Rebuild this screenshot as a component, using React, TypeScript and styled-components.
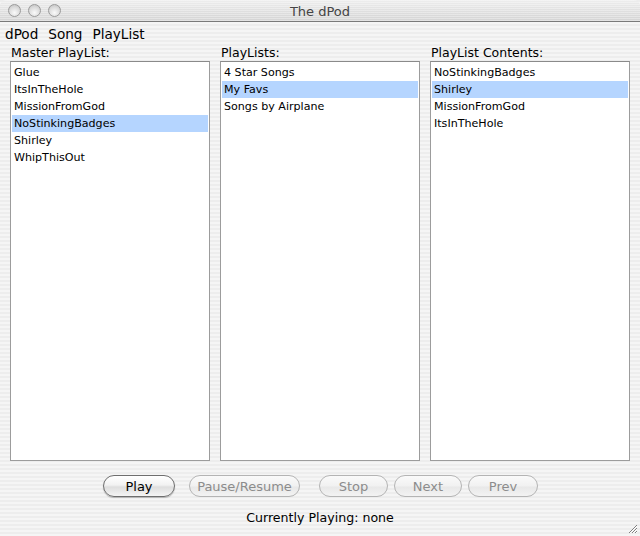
import * as React from "react";
import styled, { createGlobalStyle } from "styled-components";

const GlobalStyle = createGlobalStyle`
  html, body {
    margin: 0;
    padding: 0;
  }
  body {
    font-family: "DejaVu Sans", "Liberation Sans", sans-serif;
    font-size: 12px;
    color: #000;
  }
`;

const master = ["Glue", "ItsInTheHole", "MissionFromGod", "NoStinkingBadges", "Shirley", "WhipThisOut"];
const playlists = ["4 Star Songs", "My Favs", "Songs by Airplane"];
const contents = ["NoStinkingBadges", "Shirley", "MissionFromGod", "ItsInTheHole"];

const buttons = [
  { label: "Play", width: 72, enabled: true, gap: 14 },
  { label: "Pause/Resume", width: 111, enabled: false, gap: 19 },
  { label: "Stop", width: 69, enabled: false, gap: 6 },
  { label: "Next", width: 68, enabled: false, gap: 6 },
  { label: "Prev", width: 70, enabled: false, gap: 0 },
];

type PanelProps = { title: string; items: string[]; selected: number };

const Panel = ({ title, items, selected }: PanelProps) => (
  <Column>
    <Label>{title}</Label>
    <ListBox>
      {items.map((item, i) => (
        <Row key={item} $selected={i === selected}>
          {item}
        </Row>
      ))}
    </ListBox>
  </Column>
);

const App = () => {
  return (
    <Window>
      <GlobalStyle />
      <TitleBar>
        <Lights>
          <Light />
          <Light />
          <Light />
        </Lights>
        <Title>The dPod</Title>
      </TitleBar>
      <MenuBar>
        <MenuItem>dPod</MenuItem>
        <MenuItem>Song</MenuItem>
        <MenuItem>PlayList</MenuItem>
      </MenuBar>
      <Body>
        <Panels>
          <Panel title="Master PlayList:" items={master} selected={3} />
          <Panel title="PlayLists:" items={playlists} selected={1} />
          <Panel title="PlayList Contents:" items={contents} selected={1} />
        </Panels>
        <ButtonRow>
          {buttons.map((b) => (
            <Button key={b.label} $w={b.width} $enabled={b.enabled} $gapAfter={b.gap}>
              {b.label}
            </Button>
          ))}
        </ButtonRow>
        <Status>Currently Playing: none</Status>
      </Body>
      <Grip>
        <svg width="11" height="11" viewBox="0 0 11 11">
          <path d="M10 2 L2 10 M10 5 L5 10 M10 8 L8 10" stroke="#808080" strokeWidth="1" />
          <path d="M10 3 L3 10 M10 6 L6 10 M10 9 L9 10" stroke="#fff" strokeWidth="1" />
        </svg>
      </Grip>
    </Window>
  );
};

const stripes = `repeating-linear-gradient(
  to bottom,
  #ededed 0px,
  #ededed 2px,
  #f5f5f5 2px,
  #f5f5f5 4px
)`;

const Window = styled.div`
  position: relative;
  width: 640px;
  height: 536px;
  overflow: hidden;
  background: ${stripes};
  display: flex;
  flex-direction: column;
`;

const TitleBar = styled.div`
  height: 21px;
  display: flex;
  align-items: center;
  justify-content: center;
  position: relative;
  background: repeating-linear-gradient(
      to bottom,
      rgba(255, 255, 255, 0.35) 0px,
      rgba(255, 255, 255, 0.35) 1px,
      rgba(0, 0, 0, 0) 1px,
      rgba(0, 0, 0, 0) 2px
    ),
    linear-gradient(to bottom, #eeeeee 0%, #e0e0e0 50%, #d4d4d4 100%);
  border-bottom: 1px solid #7a7a7a;
  border-radius: 6px 6px 0 0;
`;

const Lights = styled.div`
  position: absolute;
  left: 8px;
  top: 4px;
  display: flex;
  gap: 7px;
`;

const Light = styled.div`
  width: 13px;
  height: 13px;
  border-radius: 50%;
  box-sizing: border-box;
  border: 1px solid #9a9a9a;
  background: radial-gradient(circle at 50% 70%, #fafafa 0%, #dcdcdc 55%, #bdbdbd 100%);
`;

const Title = styled.span`
  font-size: 13px;
  color: #444;
  margin-top: 2px;
`;

const MenuBar = styled.div`
  height: 23px;
  display: flex;
  align-items: center;
  padding: 1px 0 0 5px;
  gap: 10px;
  box-sizing: border-box;
`;

const MenuItem = styled.span`
  font-size: 13.6px;
`;

const Body = styled.div`
  flex: 1;
  display: flex;
  flex-direction: column;
  padding: 0 10px;
`;

const Panels = styled.div`
  display: grid;
  grid-template-columns: repeat(3, 200px);
  column-gap: 10px;
`;

const Column = styled.div`
  display: flex;
  flex-direction: column;
`;

const Label = styled.div`
  height: 16px;
  line-height: 16px;
  padding-left: 1px;
  font-size: 12.5px;
`;

const ListBox = styled.div`
  height: 400px;
  box-sizing: border-box;
  background: #fff;
  border: 1px solid #9c9c9c;
  border-top-color: #8a8a8a;
  padding: 2px 1px;
  font-size: 11.1px;
`;

const Row = styled.div<{ $selected: boolean }>`
  height: 17px;
  line-height: 17px;
  padding-left: 2px;
  background: ${({ $selected }) => ($selected ? "#b5d5ff" : "transparent")};
`;

const ButtonRow = styled.div`
  display: flex;
  margin-top: 14px;
  padding-left: 93px;
  height: 22px;
`;

const Button = styled.div<{ $w: number; $enabled: boolean; $gapAfter: number }>`
  width: ${({ $w }) => $w}px;
  height: 22px;
  box-sizing: border-box;
  margin-right: ${({ $gapAfter }) => $gapAfter}px;
  border-radius: 11px;
  border: 1px solid ${({ $enabled }) => ($enabled ? "#6e6e6e" : "#b4b4b4")};
  background: ${({ $enabled }) =>
    $enabled
      ? "linear-gradient(to bottom, #ffffff 0%, #f2f2f2 45%, #dedede 55%, #f4f4f4 100%)"
      : "linear-gradient(to bottom, #fafafa 0%, #f1f1f1 50%, #e8e8e8 55%, #f3f3f3 100%)"};
  color: ${({ $enabled }) => ($enabled ? "#000" : "#8c8c8c")};
  display: flex;
  align-items: center;
  justify-content: center;
  font-size: 13px;
  box-shadow: ${({ $enabled }) => ($enabled ? "0 1px 1px rgba(0,0,0,0.25)" : "none")};
`;

const Status = styled.div`
  margin-top: 13px;
  text-align: center;
  font-size: 12.6px;
`;

const Grip = styled.div`
  position: absolute;
  right: 1px;
  bottom: 1px;
  width: 12px;
  height: 12px;
`;

export default App;
